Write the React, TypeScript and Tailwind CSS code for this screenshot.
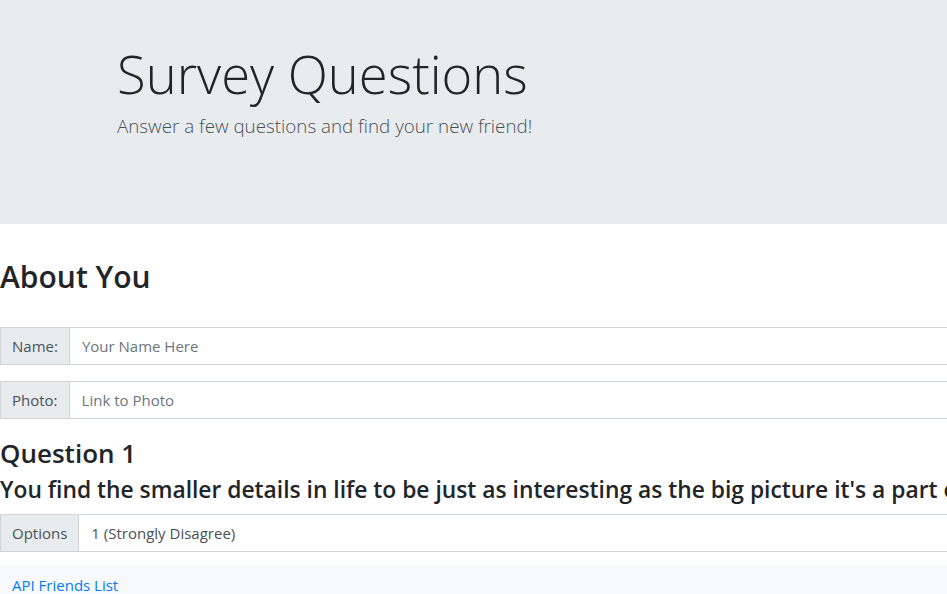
import React from "react";

const font = { fontFamily: '"Segoe UI", "Open Sans", "Noto Sans", sans-serif' };

function Group({ label, value, placeholder }: { label: string; value?: string; placeholder?: boolean }) {
  return (
    <div className="flex h-[38px] w-[1100px] text-[15px] leading-[24px]">
      <div className="flex items-center border border-[#ced4da] bg-[#e9ecef] px-[11px] text-[#495057]">{label}</div>
      <div
        className={
          "flex flex-1 items-center border border-l-0 border-[#ced4da] bg-white px-[12px] " +
          (placeholder ? "text-[#6c757d]" : "text-[#495057]")
        }
      >
        {value}
      </div>
    </div>
  );
}

export default function App() {
  return (
    <div className="h-[594px] w-[947px] overflow-hidden bg-white text-[#212529]" style={font}>
      <div className="h-[224px] bg-[#e9ecef] pl-[117px] pt-[42px]">
        <h1 className="text-[52.5px] font-light leading-[1.2]">Survey Questions</h1>
        <p className="mt-[7px] text-[18.8px] font-light text-[#495057]">Answer a few questions and find your new friend!</p>
      </div>
      <div className="pt-[35px]">
        <h2 className="text-[30px] font-semibold leading-[1.2]">About You</h2>
        <div className="mt-[32px]">
          <Group label="Name:" value="Your Name Here" placeholder />
        </div>
        <div className="mt-[16px]">
          <Group label="Photo:" value="Link to Photo" placeholder />
        </div>
        <h3 className="mt-[19px] text-[26px] font-semibold leading-[1.2]">Question 1</h3>
        <h4 className="mt-[7px] whitespace-nowrap text-[22.8px] font-semibold leading-[1.2]">
          You find the smaller details in life to be just as interesting as the big picture it's a part of.
        </h4>
        <div className="mt-[10px]">
          <Group label="Options" value="1 (Strongly Disagree)" />
        </div>
      </div>
      <div className="mt-[13px] h-[60px] bg-[#f8f9fa] px-[12px] pt-[8px]">
        <a className="text-[15px] text-[#007bff]" href="#">API Friends List</a>
      </div>
    </div>
  );
}
